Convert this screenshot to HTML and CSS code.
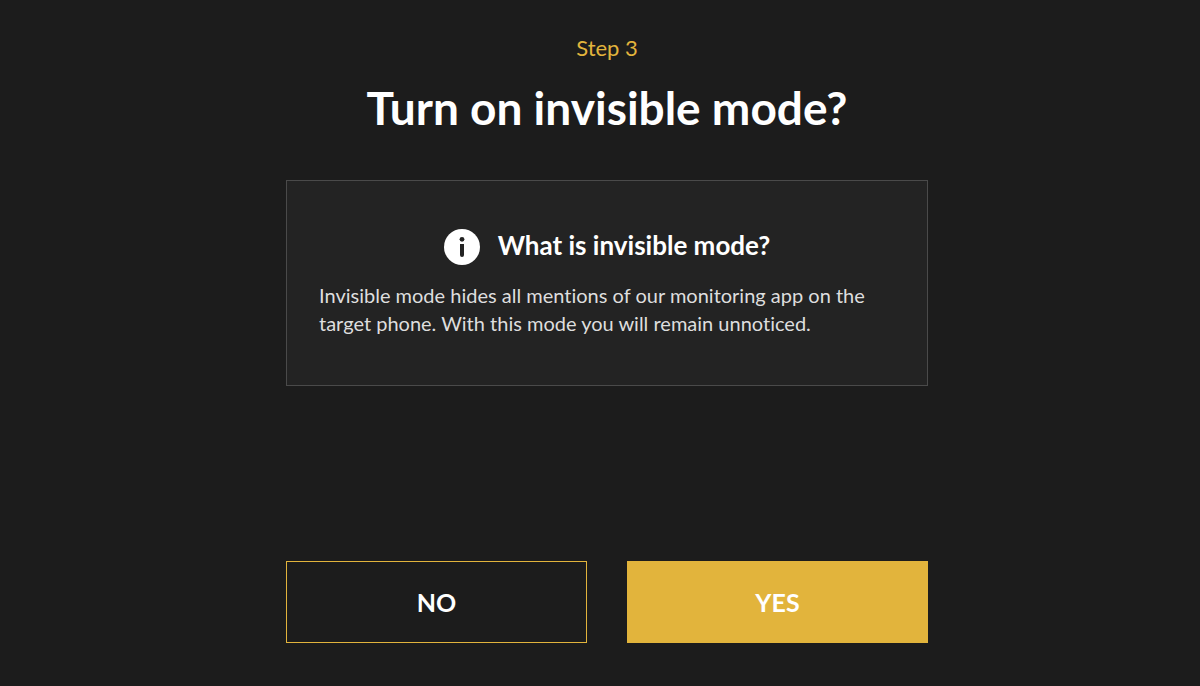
FILE: index.html
```html
<!DOCTYPE html>
<html lang="en">
<head>
  <meta charset="UTF-8">
  <title>Turn on invisible mode?</title>
  <meta name="viewport" content="width=device-width, initial-scale=1.0">
  <link rel="stylesheet" href="styles.css">
</head>
<body>
  <main class="wizard">
    <p class="step">Step 3</p>
    <h1 class="title">Turn on invisible mode?</h1>

    <section class="info-box">
      <h2 class="info-title">
        <svg class="info-icon" viewBox="0 0 36 36" aria-hidden="true">
          <circle cx="18" cy="18" r="18" fill="#fff"/>
          <circle cx="18" cy="10.3" r="2.4" fill="#232323"/>
          <path d="M16 15h4v11a2 2 0 0 1-4 0z" fill="#232323"/>
        </svg>
        <span>What is invisible mode?</span>
      </h2>
      <p class="info-text">Invisible mode hides all mentions of our monitoring app on the target phone. With this mode you will remain unnoticed.</p>
    </section>

    <div class="actions">
      <button type="button" class="btn btn-outline">NO</button>
      <button type="button" class="btn btn-primary">YES</button>
    </div>
  </main>
</body>
</html>
```
FILE: styles.css
```css
* {
  box-sizing: border-box;
}

body {
  background-color: #1c1c1c;
  color: #fff;
  font-family: Lato, sans-serif;
  margin: 0;
  padding-left: 14px;
}

.wizard {
  display: flex;
  flex-direction: column;
  min-height: 100vh;
  max-width: 642px;
  margin: 0 auto;
  padding: 36px 0 43px;
}

.step {
  margin: 0;
  color: #e2b43c;
  font-size: 22px;
  line-height: 24px;
  text-align: center;
}

.title {
  margin: 18px 0 42px;
  font-size: 46px;
  line-height: 60px;
  text-align: center;
}

.info-box {
  padding: 48px 32px;
  background-color: #232323;
  border: 1px solid #4a4a4a;
}

.info-title {
  display: flex;
  align-items: flex-start;
  justify-content: center;
  gap: 18px;
  margin: 0 0 16px;
  font-size: 26px;
  line-height: 32px;
}

.info-icon {
  width: 36px;
  height: 36px;
}

.info-text {
  margin: 0;
  color: #dedede;
  font-size: 20px;
  line-height: 28px;
  font-variant-ligatures: none;
}

.actions {
  display: flex;
  gap: 40px;
  margin-top: auto;
}

.btn {
  flex: 1;
  padding: 24px;
  border: 1px solid #e2b43c;
  color: #fff;
  font-family: inherit;
  font-size: 25px;
  font-weight: bold;
  line-height: 32px;
  cursor: pointer;
}

.btn-outline {
  background-color: transparent;
}

.btn-primary {
  background-color: #e2b43c;
}
```
